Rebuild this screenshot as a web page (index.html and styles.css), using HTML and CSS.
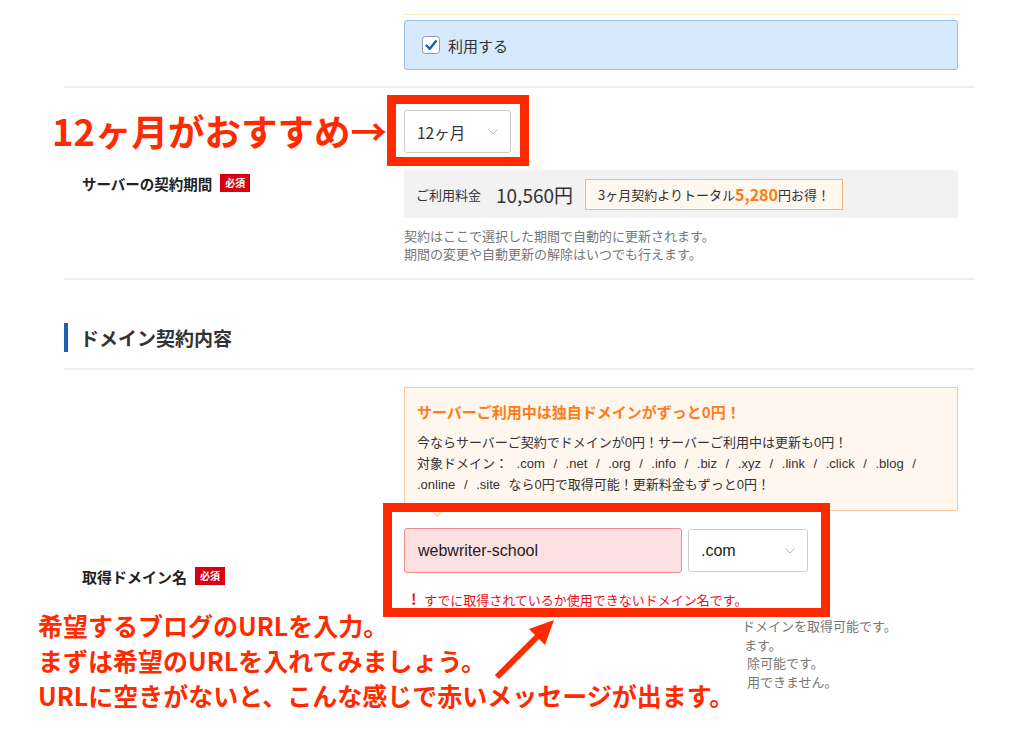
FILE: index.html
```html
<!DOCTYPE html>
<html lang="ja">
<head>
    <meta charset="UTF-8">
    <title>サーバーの契約内容</title>
    <link rel="stylesheet" href="styles.css">
</head>
<body>
    <div class="page">
        <div class="row row-option">
            <div></div>
            <div class="cell">
                <div class="rule-yellow"></div>
                <div class="option-box">
                    <span class="check">
                        <svg width="18" height="18" viewBox="0 0 18 18"><rect x="0.5" y="0.5" width="17" height="17" rx="3" fill="#fff" stroke="#8c9aae"/><path d="M4.5 9.5 L7.8 12.8 L13.8 5.2" fill="none" stroke="#1b5fb5" stroke-width="2.4" stroke-linecap="round" stroke-linejoin="round"/></svg>
                    </span>
                    利用する
                </div>
            </div>
        </div>

        <div class="row row-period">
            <div class="label">サーバーの契約期間<span class="req">必須</span></div>
            <div class="cell">
                <div class="select select-period">
                    12ヶ月
                    <svg class="chev" width="10" height="6" viewBox="0 0 10 6"><path d="M0.5 0.5 L5 5 L9.5 0.5" fill="none" stroke="#b5b5b5" stroke-width="1"/></svg>
                </div>
                <div class="price-box">
                    <span class="price-label">ご利用料金</span>
                    <span class="price">10,560円</span>
                    <span class="deal">3ヶ月契約よりトータル<b>5,280</b>円お得！</span>
                </div>
                <p class="note">契約はここで選択した期間で自動的に更新されます。<br>期間の変更や自動更新の解除はいつでも行えます。</p>
            </div>
        </div>

        <div class="section">
            <h2 class="section-title">ドメイン契約内容</h2>
        </div>

        <div class="row row-domain">
            <div class="label label-domain">取得ドメイン名<span class="req">必須</span></div>
            <div class="cell">
                <div class="promo">
                    <p class="promo-title">サーバーご利用中は独自ドメインがずっと0円！</p>
                    <p class="promo-text">今ならサーバーご契約でドメインが0円！サーバーご利用中は更新も0円！<br>対象ドメイン： .com / .net / .org / .info / .biz / .xyz / .link / .click / .blog /<br>.online / .site なら0円で取得可能！更新料金もずっと0円！</p>
                </div>
                <div class="domain-fields">
                    <div class="domain-input">webwriter-school</div>
                    <div class="select select-tld">
                        .com
                        <svg class="chev" width="10" height="6" viewBox="0 0 10 6"><path d="M0.5 0.5 L5 5 L9.5 0.5" fill="none" stroke="#b5b5b5" stroke-width="1"/></svg>
                    </div>
                </div>
                <p class="error"><span class="bang">!</span>すでに取得されているか使用できないドメイン名です。</p>
                <!-- only the right part of these notes shows beside the callout -->
                <div class="note note-domain">
                    <div>ドメインを取得可能です。</div>
                    <div class="n2">ます。</div>
                    <div class="n3">除可能です。</div>
                    <div class="n3">用できません。</div>
                </div>
            </div>
        </div>
    </div>

    <!-- annotations drawn on top of the screenshot -->
    <div class="callout-top">12ヶ月がおすすめ→</div>
    <div class="mark mark-period"></div>
    <div class="callout-bottom">
        希望するブログのURLを入力。<br>
        まずは希望のURLを入れてみましょう。<br>
        URLに空きがないと、こんな感じで赤いメッセージが出ます。
    </div>
    <div class="mark mark-domain"></div>
    <svg class="pointer-arrow" width="100" height="100" viewBox="0 0 100 100">
        <line x1="17" y1="77" x2="58" y2="36" stroke="#ff2a00" stroke-width="6"/>
        <polygon points="74,20 49,29 65,45" fill="#ff2a00"/>
    </svg>
</body>
</html>
```

FILE: styles.css
```css
body {
    margin: 0;
    font-family: "Noto Sans CJK JP", sans-serif;
    color: #333;
    background: #fff;
    height: 733px;
    overflow: hidden;
    position: relative;
}
p {
    margin: 0;
}
.page {
    width: 911px;
    margin-left: 64px;
}
.row {
    display: grid;
    grid-template-columns: 340px 554px;
    border-bottom: 2px solid #eeeeee;
}
.label {
    display: flex;
    align-items: center;
    gap: 8px;
    padding-left: 18px;
    font-size: 14.5px;
    font-weight: bold;
    color: #222;
    align-self: center;
    height: 20px;
}
.req {
    background: #d6000f;
    color: #fff;
    font-size: 10px;
    line-height: 18px;
    padding: 0 5px;
}

/* option row */
.row-option .cell {
    padding: 14px 0 16px;
}
.rule-yellow {
    height: 1px;
    background: #f7ecc6;
    margin-bottom: 5px;
}
.option-box {
    height: 50px;
    box-sizing: border-box;
    display: flex;
    align-items: center;
    gap: 8px;
    padding-left: 17px;
    background: #d7e9fc;
    border: 1px solid #9cbbe0;
    border-radius: 3px;
    font-size: 15px;
}
.check svg {
    display: block;
}

/* period row */
.row-period .cell {
    padding: 22px 0 15px;
}
.select {
    display: flex;
    align-items: center;
    justify-content: space-between;
    box-sizing: border-box;
    background: #fff;
    border: 1px solid #cccccc;
    border-radius: 3px;
}
.select-period {
    width: 107px;
    height: 43px;
    padding: 0 12px;
    font-size: 15.5px;
}
.price-box {
    margin-top: 17px;
    height: 48px;
    display: flex;
    align-items: center;
    padding-left: 12px;
    background: #f2f2f2;
}
.price-label {
    font-size: 13px;
}
.price {
    font-size: 19px;
    margin-left: 15px;
}
.deal {
    margin-left: 12px;
    height: 31px;
    box-sizing: border-box;
    display: flex;
    align-items: center;
    padding: 0 12px;
    border: 1px solid #fbb27f;
    background: #fff8ef;
    font-size: 13px;
}
.deal b {
    color: #ff7b12;
    font-size: 16px;
}
.note {
    margin-top: 9px;
    font-size: 13px;
    line-height: 18px;
    color: #777;
}

/* section heading */
.section {
    padding: 43px 0 16px;
    border-bottom: 2px solid #eeeeee;
}
.section-title {
    margin: 0;
    height: 29px;
    line-height: 29px;
    border-left: 4px solid #1d5fb0;
    padding-left: 12px;
    font-size: 19px;
    color: #333;
}

/* domain row */
.row-domain {
    border-bottom: none;
}
.label-domain {
    align-self: start;
    margin-top: 196px;
    font-size: 15px;
}
.row-domain .cell {
    padding-top: 17px;
}
.promo {
    position: relative;
    padding: 14px 12px 15px;
    background: #fff7ee;
    border: 1px solid #fbc79b;
}
.promo::after {
    content: "";
    position: absolute;
    left: 28px;
    bottom: -5px;
    width: 7px;
    height: 7px;
    background: #fff7ee;
    border-right: 1px solid #fbc79b;
    border-bottom: 1px solid #fbc79b;
    transform: rotate(45deg);
}
.promo-title {
    font-size: 15px;
    line-height: 20px;
    font-weight: bold;
    color: #ff7b1a;
}
.promo-text {
    margin-top: 10px;
    font-family: "Liberation Sans", "Noto Sans CJK JP", sans-serif;
    font-size: 13px;
    line-height: 21px;
    word-spacing: 5px;
}
.domain-fields {
    margin-top: 17px;
    display: flex;
    align-items: center;
    gap: 6px;
}
.domain-input {
    width: 278px;
    height: 45px;
    box-sizing: border-box;
    display: flex;
    align-items: center;
    padding-left: 13px;
    background: #fde0e1;
    border: 1px solid #f08b8b;
    border-radius: 3px;
    font-family: "Liberation Sans", sans-serif;
    font-size: 16px;
    color: #222;
}
.select-tld {
    width: 120px;
    height: 43px;
    padding: 0 12px;
    font-family: "Liberation Sans", sans-serif;
    font-size: 16px;
    color: #222;
}
.error {
    margin-top: 17px;
    padding-left: 7px;
    font-size: 13px;
    line-height: 18px;
    color: #e8111b;
}
.bang {
    display: inline-block;
    width: 13px;
    font-weight: bold;
    font-size: 15px;
}
.note-domain {
    margin: 8px 0 0 338px;
    line-height: 18.5px;
    white-space: nowrap;
}
.n2 {
    padding-left: 2px;
}
.n3 {
    padding-left: 5px;
}

/* annotations */
.callout-top {
    position: absolute;
    left: 52px;
    top: 111px;
    font-size: 36.5px;
    line-height: 40px;
    font-weight: bold;
    color: #ff2a00;
}
.mark {
    position: absolute;
    box-sizing: border-box;
    border: 9px solid #ff2a00;
}
.mark-period {
    left: 387px;
    top: 95px;
    width: 142px;
    height: 71px;
}
.mark-domain {
    left: 383px;
    top: 503px;
    width: 447px;
    height: 114px;
}
.callout-bottom {
    position: absolute;
    left: 30px;
    top: 608px;
    padding-left: 8px;
    font-size: 25px;
    line-height: 35px;
    font-weight: bold;
    color: #ff2a00;
    white-space: nowrap;
}
.pointer-arrow {
    position: absolute;
    left: 480px;
    top: 600px;
}
```
